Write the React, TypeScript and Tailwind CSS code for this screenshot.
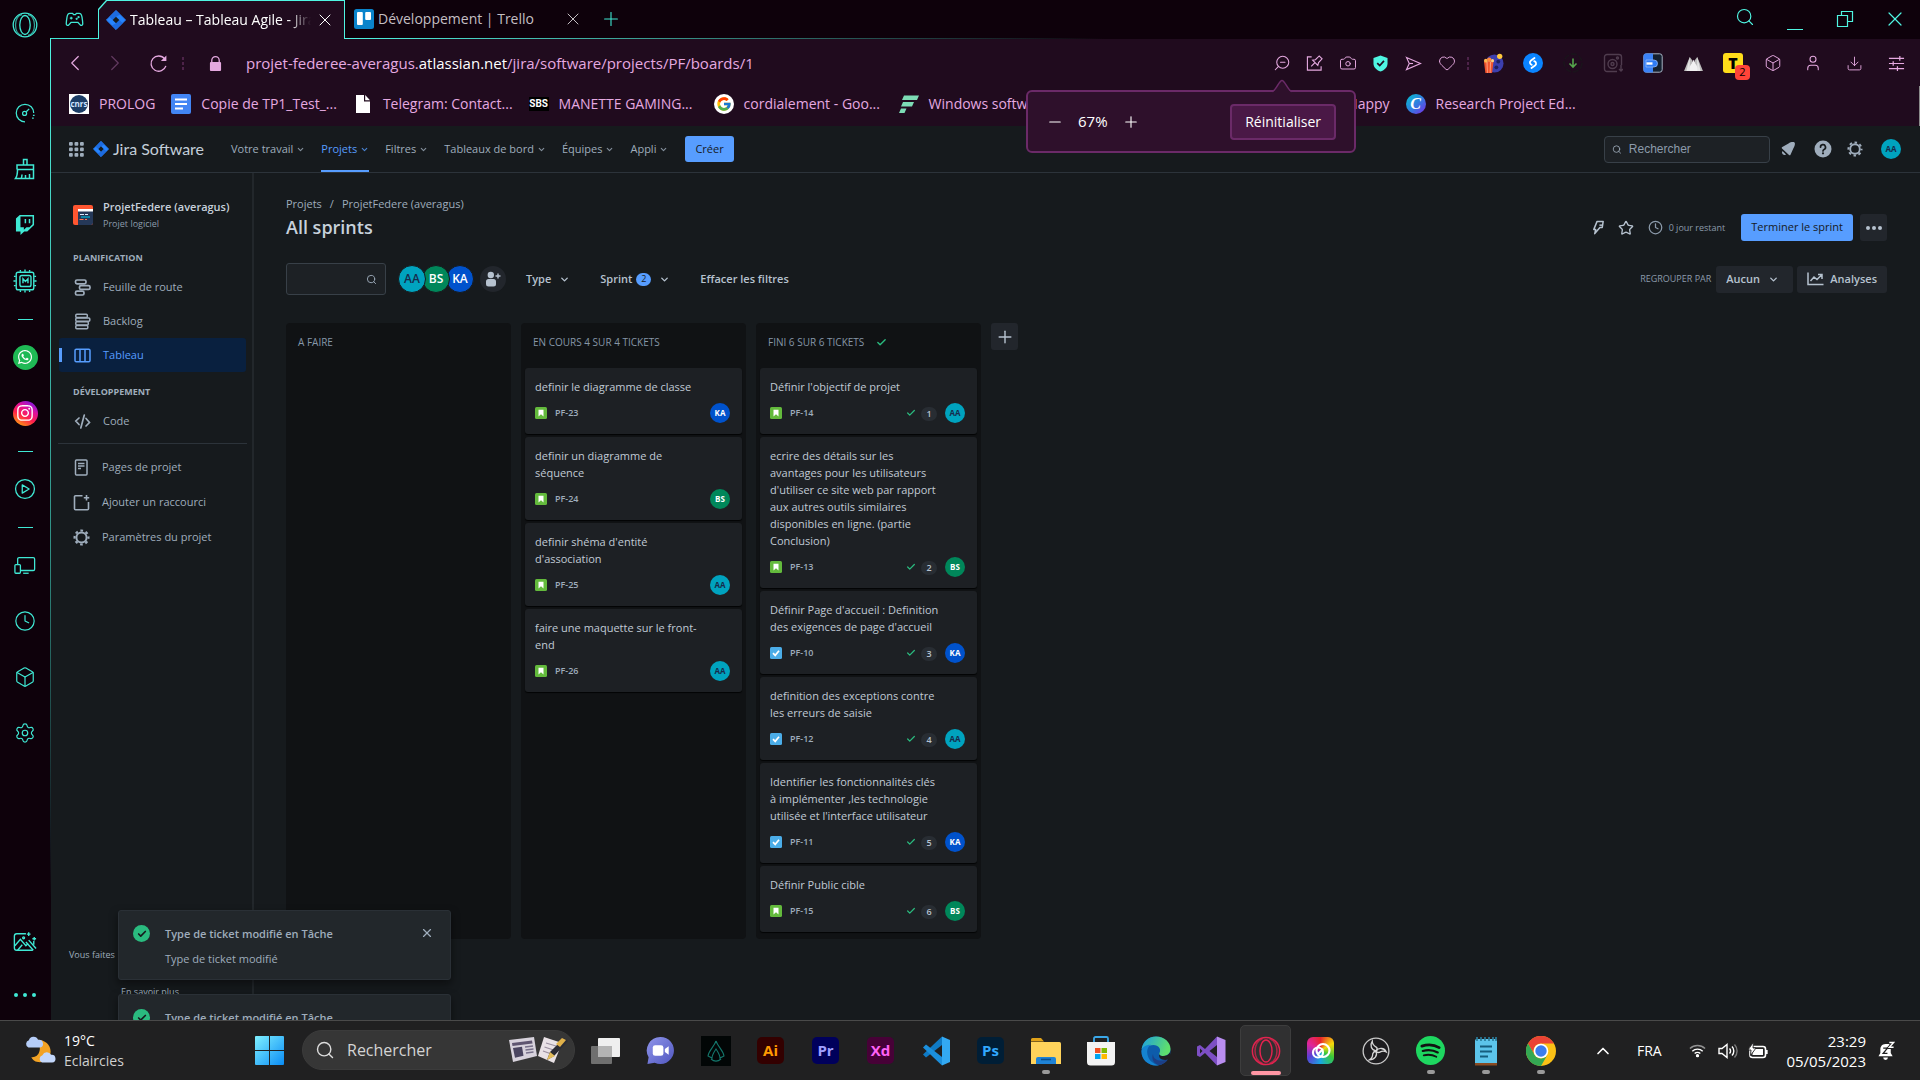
import React from 'react';
import {
  Box, Camera, Check, ChevronDown, ChevronLeft, ChevronRight, ChevronUp, Clock, Download,
  Heart, Minus, Plus, Search, Settings, Star, User, X, ZoomOut,
} from 'lucide-react';
import { FaTwitch, FaWhatsapp, FaInstagram } from 'react-icons/fa';
import { FcGoogle } from 'react-icons/fc';

/* ---------- Shared glyphs ---------- */

const JiraMark = ({ className }: { className: string }) => (
  <svg viewBox="0 0 24 24" className={className} aria-hidden="true">
    <path d="M12 0.5 23.5 12 12 23.5 0.5 12Z" fill="#2684ff" stroke="#2684ff" strokeLinejoin="round" />
    <path d="M12 0.5 17 5.500 12 8 8 12 4 8.500Z" fill="#1d6be0" />
    <path d="M12 23.500 7 18.500 12 16 16 12 20 15.500Z" fill="#1d6be0" />
    <path d="M12 8 16 12 12 16 8 12Z" fill="#161a1d" />
  </svg>
);

const CogOutline = ({ className }: { className: string }) => (
  <svg viewBox="0 0 24 24" className={className} fill="none" aria-hidden="true">
    <circle cx="12" cy="12" r="7.200" stroke="currentColor" strokeWidth="2.800" />
    <circle cx="12" cy="12" r="9.800" stroke="currentColor" strokeWidth="3" strokeDasharray="3.800 3.900" strokeDashoffset="1.900" />
  </svg>
);

const OperaRing = ({ className }: { className: string }) => (
  <svg viewBox="0 0 26 26" className={className} fill="none" stroke="currentColor" strokeWidth="1.300" aria-hidden="true">
    <circle cx="13" cy="13" r="11.800" />
    <ellipse cx="13" cy="13" rx="5.200" ry="9.500" />
    <path d="M10 2.500c-4.500 1-6.500 6-6.500 10.500s2 9.500 6.500 10.500M16 2.500c4.500 1 6.500 6 6.500 10.500s-2 9.500-6.500 10.500" opacity="0.700" />
  </svg>
);

/* ---------- Opera sidebar ---------- */

const Gauge = () => (
  <svg viewBox="0 0 24 24" className="size-5" fill="none" stroke="currentColor" strokeWidth="1.500">
    <path d="M12 22.500a10.500 10.500 0 1 1 10.500-10.500" />
    <path d="M22.500 14v1.500M21.500 17.500v1.500" strokeWidth="2" />
    <circle cx="11.500" cy="12.500" r="2.400" />
    <path d="m13.500 10.500 3.500-3.500" />
  </svg>
);
const Broom = () => (
  <svg viewBox="0 0 24 24" className="size-6" fill="none" stroke="currentColor" strokeWidth="1.500">
    <path d="M10.500 8V2.500h3.500V8M4 12.500V8h16.500v4.500M4 12.500h16.500M4.500 12.500c0 4-.500 7-2 9h18V12.500M8 21.500c.800-1 1-2 1-4M12.500 21.500V18M16.500 21.500V17" />
  </svg>
);
const Chip = () => (
  <svg viewBox="0 0 26 26" className="size-6" fill="none" stroke="currentColor" strokeWidth="1.500">
    <rect x="3.500" y="3.500" width="19" height="19" rx="2" />
    <rect x="7.500" y="7" width="12" height="12" rx="2" />
    <path d="M8 3V1M13 3V0.500M18 3V1M8 25v-2M13 25.500V23M18 25v-2M3 8H1M3 13H.500M3 18H1M25 8h-2M25.500 13H23M25 18h-2" />
    <path d="M10.800 15.500v-5l2.700 3 2.700-3v5" />
  </svg>
);
const PlayRing = () => (
  <svg viewBox="0 0 24 24" className="size-[22px]" fill="none" stroke="currentColor" strokeWidth="1.400">
    <circle cx="12" cy="12" r="10.300" />
    <path d="M9 7.500v9l7.500-4.500Z" strokeLinejoin="round" />
  </svg>
);
const Devices = () => (
  <svg viewBox="0 0 24 24" className="size-[22px]" fill="none" stroke="currentColor" strokeWidth="1.400">
    <path d="M4 11V5.500A1.500 1.500 0 0 1 5.500 4H21a1.500 1.500 0 0 1 1.500 1.500v11A1.500 1.500 0 0 1 21 18H7" />
    <rect x="1" y="11.500" width="6" height="9.500" rx="1" />
    <path d="M10 21h6" />
  </svg>
);
const MagicPicture = () => (
  <svg viewBox="0 0 26 26" className="size-6" fill="none" stroke="currentColor" strokeWidth="1.500">
    <path d="M14 4H4a2.500 2.500 0 0 0-2.500 2.500v13A2.500 2.500 0 0 0 4 22h17.500M22.500 12v4" />
    <path d="m2 17 6-7 6 7 2.500-2.500M5 22l5-6M17 11l8 9M14 13l8 9" />
    <circle cx="11.500" cy="8.500" r="1" />
    <path d="M17 2.500v4M15 4.500h4M23 7.500v4M21 9.500h4" />
  </svg>
);
const Gamepad = () => (
  <svg viewBox="0 0 20 16" className="h-[15px] w-[19px]" fill="none" stroke="currentColor" strokeWidth="1.400" strokeLinejoin="round">
    <path d="M5 1.500h3l1 1.300h2l1-1.300h3c1.800 0 2.600 1.500 3 4 .400 2.500.800 5.500.800 7s-1.300 2.300-2.500 1.500L13.500 11h-7l-2.800 3c-1.200.800-2.500 0-2.500-1.500s.400-4.500.800-7c.400-2.500 1.200-4 3-4Z" />
    <path d="M5 6.500h3M6.500 5v3" strokeWidth="1.200" /><circle cx="12.300" cy="7.300" r="0.500" /><circle cx="14.300" cy="5.500" r="0.500" />
  </svg>
);

const SideDash = () => (
  <div className="flex h-5 w-full items-center justify-center"><span className="h-px w-[15px] bg-[#3fe8d4]" /></div>
);
const SideButton = ({ label, children }: { label: string; children: React.ReactNode }) => (
  <button aria-label={label} className="flex h-14 w-full items-center justify-center">{children}</button>
);

const OperaSidebar = () => (
  <aside className="flex w-[50px] shrink-0 flex-col bg-[#0e010b] text-[#3fe8d4]">
    <button aria-label="Menu Opera" className="flex h-[50px] items-center justify-center"><OperaRing className="size-[26px]" /></button>
    <nav className="mt-[35px] flex flex-1 flex-col">
      <SideButton label="Contrôle GX"><Gauge /></SideButton>
      <SideButton label="Nettoyeur GX"><Broom /></SideButton>
      <SideButton label="Twitch"><FaTwitch className="size-5" /></SideButton>
      <SideButton label="Mods"><Chip /></SideButton>
      <SideDash />
      <SideButton label="WhatsApp">
        <span className="flex size-[25px] items-center justify-center rounded-full bg-[#1fb955] text-white"><FaWhatsapp className="size-4" /></span>
      </SideButton>
      <SideButton label="Instagram">
        <span className="flex size-[25px] items-center justify-center rounded-full bg-[linear-gradient(30deg,#ffc400_0%,#ff1f4b_40%,#e0109a_65%,#5a1bff_100%)] text-white"><FaInstagram className="size-[18px]" /></span>
      </SideButton>
      <SideDash />
      <SideButton label="Lecteur"><PlayRing /></SideButton>
      <SideDash />
      <SideButton label="Flow"><Devices /></SideButton>
      <SideButton label="Historique"><Clock className="size-[22px]" strokeWidth={1.300} /></SideButton>
      <SideButton label="Extensions"><Box className="size-[22px]" strokeWidth={1.300} /></SideButton>
      <SideButton label="Réglages"><Settings className="size-[22px]" strokeWidth={1.300} /></SideButton>
      <div className="mt-auto">
        <SideButton label="Fond d'écran"><MagicPicture /></SideButton>
        <button aria-label="Plus" className="flex h-[50px] w-full items-center justify-center gap-[5px]">
          <span className="size-1 rounded-full bg-current" /><span className="size-1 rounded-full bg-current" /><span className="size-1 rounded-full bg-current" />
        </button>
      </div>
    </nav>
  </aside>
);

/* ---------- Browser chrome ---------- */

const TabBar = () => (
  <div className="flex h-[39px] bg-[#0e010b] text-sm">
    <div className="flex w-[47px] items-center justify-center border-b border-[#3fe8d4] text-[#3fe8d4]">
      <Gamepad />
    </div>
    <div className="w-[247px] bg-[#4ff5e2] px-px pt-px [clip-path:polygon(8px_0,100%_0,100%_100%,0_100%,0_9px)]">
      <div className="flex h-full items-center bg-[#200b1e] pl-[7px] pr-[9px] [clip-path:polygon(8px_0,100%_0,100%_100%,0_100%,0_9px)]">
        <JiraMark className="size-5 shrink-0" />
        <span className="ml-1 min-w-0 flex-1 overflow-hidden whitespace-nowrap text-white [mask-image:linear-gradient(to_right,black_88%,transparent)]">Tableau – Tableau Agile - Jira</span>
        <button aria-label="Fermer l'onglet" className="ml-1 text-white"><X className="size-5" strokeWidth={1.200} /></button>
      </div>
    </div>
    <div className="flex min-w-0 flex-1 flex-col">
      <div className="flex flex-1 items-center">
        <svg viewBox="0 0 20 20" className="ml-[9px] size-5"><rect width="20" height="20" rx="2.500" fill="#0a84cc" /><rect x="3" y="3" width="5.800" height="13" rx="1" fill="#fff" /><rect x="11.200" y="3" width="5.800" height="8" rx="1" fill="#fff" /></svg>
        <span className="ml-1 w-[185px] text-[#c4bfc3]">Développement | Trello</span>
        <button aria-label="Fermer l'onglet" className="text-[#c4bfc3]"><X className="size-5" strokeWidth={1.200} /></button>
        <button aria-label="Nouvel onglet" className="ml-[17px] text-[#3fe8d4]"><Plus className="size-[22px]" strokeWidth={1.200} /></button>
        <div className="ml-auto flex text-[#4ff5e2]">
          <button aria-label="Rechercher dans les onglets" className="flex w-[50px] justify-center"><Search className="size-5" strokeWidth={1.400} /></button>
          <button aria-label="Réduire" className="flex w-[50px] items-end justify-center"><span className="mb-px h-px w-4 bg-current" /></button>
          <button aria-label="Restaurer" className="flex w-[50px] items-center justify-center">
            <svg viewBox="0 0 18 18" className="size-[18px]" fill="none" stroke="currentColor" strokeWidth="1.200"><path d="M1.500 5.500h10v11h-10zM5.500 5.500v-4h11v10h-5" /></svg>
          </button>
          <button aria-label="Fermer" className="flex w-[50px] items-center justify-center"><X className="size-6" strokeWidth={1.200} /></button>
        </div>
      </div>
      <div className="h-px bg-[linear-gradient(to_right,#4ff5e2_0,#3a9c91_300px,transparent_760px)]" />
    </div>
  </div>
);

const ZoomPopup = () => (
  <div className="absolute right-[-58px] top-9 z-30 flex h-[63px] w-[330px] items-center rounded-md border-2 border-[#6b2a68] bg-[#2e102b] px-[18px] text-sm text-white">
    <svg viewBox="0 0 20 14" className="absolute right-[62px] top-[-13px] h-[14px] w-5">
      <path d="M0 13 C4 13 7 1.500 10 1.500 C13 1.500 16 13 20 13 V14 H0Z" fill="#2e102b" />
      <path d="M0 12.500 C4 12 7 1.500 10 1.500 C13 1.500 16 12 20 12.500" fill="none" stroke="#6b2a68" strokeWidth="1.500" />
    </svg>
    <button aria-label="Zoom arrière"><Minus className="size-[18px]" strokeWidth={1.500} /></button>
    <span className="mx-3.5 text-[15px]">67%</span>
    <button aria-label="Zoom avant"><Plus className="size-[18px]" strokeWidth={1.500} /></button>
    <button className="ml-auto h-9 rounded border-2 border-[#6b2a68] bg-[#4a1846] px-[13px]">Réinitialiser</button>
  </div>
);

const Cell = ({ label, wide, children }: { label: string; wide?: boolean; children: React.ReactNode }) => (
  <button aria-label={label} className={wide ? 'flex w-10 items-center justify-center' : 'flex w-[33px] items-center justify-center'}>{children}</button>
);

const Popcorn = () => (
  <svg viewBox="0 0 22 22" className="size-[21px]">
    <circle cx="12" cy="11" r="9.500" fill="#3c3fae" />
    <circle cx="16" cy="9" r="2" fill="#20205e" /><circle cx="14" cy="15" r="2" fill="#20205e" />
    <path d="M1 9h10l-1.500 12H2.500Z" fill="#f0532d" /><path d="M3.500 9h1.300l.300 12H4.200zM7.300 9h1.300l-.700 12H7Z" fill="#ff9a7a" />
    <circle cx="3" cy="8" r="2" fill="#ffb54d" /><circle cx="6.500" cy="7" r="2.300" fill="#ff8a3d" /><circle cx="10" cy="8" r="1.600" fill="#ffcf7a" /><circle cx="17.500" cy="3.500" r="2.800" fill="#ffc93c" />
  </svg>
);

const AddressBar = () => (
  <div className="flex h-[48px] items-center pl-1 pr-[3px] text-[#e5a9e0]">
    <button aria-label="Précédent" className="flex w-10 justify-center"><ChevronLeft className="size-[26px]" strokeWidth={1.100} /></button>
    <button aria-label="Suivant" className="flex w-10 justify-center text-[#623a60]"><ChevronRight className="size-[26px]" strokeWidth={1.100} /></button>
    <button aria-label="Recharger" className="flex w-[46px] justify-center">
      <svg viewBox="0 0 20 20" className="size-[19px]" fill="none" stroke="currentColor" strokeWidth="1.400"><path d="M17.800 12.500A8 8 0 1 1 16.500 5.200" /><path d="M18.300 1.500v5.800h-5.800Z" fill="currentColor" stroke="none" /></svg>
    </button>
    <span className="w-1.5 text-[#4d2349]"><svg viewBox="0 0 4 14" className="h-3.5 w-1" fill="currentColor"><rect x="1" y="1" width="2" height="3" /><rect x="1" y="6" width="2" height="3" /><rect x="1" y="11" width="2" height="3" /></svg></span>
    <button aria-label="Informations du site" className="flex w-14 justify-center">
      <svg viewBox="0 0 14 18" className="h-[17px] w-[13px]"><path d="M3 9V5.500a4 4 0 0 1 8 0V9" fill="none" stroke="currentColor" strokeWidth="1.400" /><rect x="1" y="7.500" width="12" height="9.500" rx="1" fill="currentColor" /></svg>
    </button>
    <div className="min-w-0 flex-1 truncate pl-[3px] text-[15px]">projet-federee-averagus.<span className="text-white">atlassian.net</span>/jira/software/projects/PF/boards/1</div>
    <div className="flex items-center">
      <div className="relative">
        <Cell label="Zoom"><ZoomOut className="size-[18px] -scale-x-100" strokeWidth={1.400} /></Cell>
        <ZoomPopup />
      </div>
      <Cell label="Épingler">
        <svg viewBox="0 0 18 18" className="size-[17px]" fill="none" stroke="currentColor" strokeWidth="1.200"><path d="M6 2H1.500v14h14.500v-4M5.500 12l4-4M7 5.500l5.500 5.500.800-3L17 4l-3-3-4 4Z" /></svg>
      </Cell>
      <Cell label="Capture"><Camera className="size-[18px]" strokeWidth={1.300} /></Cell>
      <Cell label="VPN">
        <svg viewBox="0 0 16 18" className="h-[17px] w-[15px]"><path d="M8 .500 15.500 3v6c0 4-3 7-7.500 8.500C3.500 16 .500 13 .500 9V3Z" fill="#4ff5e2" /><path d="m4.500 8.500 2.700 2.700 4.500-5" fill="none" stroke="#200b1e" strokeWidth="1.800" /></svg>
      </Cell>
      <Cell label="Envoyer vers Flow">
        <svg viewBox="0 0 18 16" className="h-[15px] w-[17px]" fill="none" stroke="currentColor" strokeWidth="1.200"><path d="m1.500 1.500 15 6.500-15 6.500 3-6.500Z" /><path d="M4.500 8h4" /></svg>
      </Cell>
      <Cell label="Favoris"><Heart className="size-[18px]" strokeWidth={1.300} /></Cell>
      <span className="flex w-2.5 justify-center text-[#4d2349]"><svg viewBox="0 0 4 14" className="h-3.5 w-1" fill="currentColor"><rect x="1" y="1" width="2" height="3" /><rect x="1" y="6" width="2" height="3" /><rect x="1" y="11" width="2" height="3" /></svg></span>
      <Cell wide label="Cinéma"><Popcorn /></Cell>
      <Cell wide label="Shazam">
        <svg viewBox="0 0 20 20" className="size-5"><circle cx="10" cy="10" r="10" fill="#0a84ff" /><path d="M11.500 5 8 7.500c-2 1.600-1 3.800.800 4.300M8.500 15l3.500-2.500c2-1.600 1-3.800-.800-4.300" fill="none" stroke="#fff" strokeWidth="1.800" strokeLinecap="round" /></svg>
      </Cell>
      <Cell wide label="Télécharger">
        <svg viewBox="0 0 20 20" className="size-5" fill="none"><circle cx="10" cy="10" r="9" stroke="#1b131c" strokeWidth="1.800" strokeDasharray="6 2" /><path d="M10 5.500v8M6.500 10.500 10 14l3.500-3.500" stroke="#56a54c" strokeWidth="1.600" /></svg>
      </Cell>
      <Cell wide label="Enregistrer l'image">
        <svg viewBox="0 0 20 20" className="size-5" fill="none" stroke="#4f3c4e" strokeWidth="1.400"><path d="M14 18.500H4A2.500 2.500 0 0 1 1.500 16V4A2.500 2.500 0 0 1 4 1.500h12A2.500 2.500 0 0 1 18.500 4v8M18 12v6M16 16l2 2 2-2" /><circle cx="9.500" cy="11" r="4.500" /><circle cx="9.500" cy="11" r="1.500" /><circle cx="14.500" cy="5" r="1" /></svg>
      </Cell>
      <Cell wide label="Traduction">
        <svg viewBox="0 0 20 20" className="size-5"><rect x=".800" y=".800" width="18.400" height="18.400" rx="2.500" fill="#14202f" stroke="#a5b2c2" strokeWidth="1" /><path d="M3 .500h7v19H3A2.500 2.500 0 0 1 .500 17V3A2.500 2.500 0 0 1 3 .500" fill="#3b82f6" /><path d="M3 7h8a3.500 3.500 0 0 1 0 7H3Z" fill="#2f7cf6" stroke="#8fb8fb" strokeWidth="0.800" /><path d="M3.500 10.500h6" stroke="#fff" strokeWidth="2.400" /></svg>
      </Cell>
      <Cell wide label="Montagnes">
        <svg viewBox="0 0 22 18" className="h-[17px] w-[21px]"><path d="M1 17 7 2l3 4-3 11Z" fill="#bcbcbc" /><path d="M21 17 15 2l-3 4 3 11Z" fill="#bcbcbc" /><path d="M4.500 17 11 5l6.500 12Z" fill="#f2f2f2" /><path d="M7 2v15H3.500Z" fill="#e6e6e6" /><path d="m15 2 3.500 15H15Z" fill="#e6e6e6" /></svg>
      </Cell>
      <Cell wide label="Tâches">
        <span className="relative flex size-5 items-center justify-center rounded-[3px] bg-[#ffdd1a] text-base font-extrabold text-black">T
          <span className="absolute left-3 top-3 flex h-[15px] w-[15px] items-center justify-center rounded-sm bg-[#ff4438] text-[11px] font-normal">2</span>
        </span>
      </Cell>
      <Cell wide label="Extensions"><Box className="size-[18px]" strokeWidth={1.300} /></Cell>
      <Cell wide label="Profil"><User className="size-[18px]" strokeWidth={1.400} /></Cell>
      <button aria-label="Téléchargements" className="flex w-[42px] justify-center"><Download className="size-[17px]" strokeWidth={1.300} /></button>
      <button aria-label="Configuration rapide" className="flex w-[42px] justify-center">
        <svg viewBox="0 0 18 18" className="size-[17px]" fill="none" stroke="currentColor" strokeWidth="1.300"><path d="M1 3.500h16M1 9h16M1 14.500h16M12.500 1v5M5.500 6.500v5M10 12v5" /></svg>
      </button>
    </div>
  </div>
);

const Bookmark = ({ icon, children, className = '' }: { icon?: React.ReactNode; children: React.ReactNode; className?: string }) => (
  <a href="#" className={`flex shrink-0 items-center gap-2.5 ${className}`}>
    {icon && <span className="flex size-5 shrink-0 items-center justify-center">{icon}</span>}
    <span className="whitespace-nowrap">{children}</span>
  </a>
);

const BookmarkBar = () => (
  <div className="relative flex h-[39px] items-start gap-4 pl-[18px] pt-[7px] text-sm text-[#e5a9e0]">
    <Bookmark icon={<span className="flex size-5 items-center justify-center bg-white"><span className="flex size-[18px] items-center justify-center rounded-full bg-[#1c3d66] text-[8px] font-bold text-[#cfe3ff]">cnrs</span></span>}>PROLOG</Bookmark>
    <Bookmark icon={<svg viewBox="0 0 20 20" className="size-5"><rect width="20" height="20" rx="2" fill="#4285f4" /><path d="M4 5.500h12M4 10h12M4 14.500h8" stroke="#fff" strokeWidth="2" /></svg>}>Copie de TP1_Test_...</Bookmark>
    <Bookmark icon={<svg viewBox="0 0 14 18" className="h-[18px] w-3.5"><path d="M0 0h8v6.500h6V18H0Z" fill="#fff" /><path d="M9.200 0 14 5.200H9.200Z" fill="#fff" /></svg>}>Telegram: Contact...</Bookmark>
    <Bookmark className="w-[169px]" icon={<span className="flex h-3.5 w-5 items-center justify-center bg-black font-['Roboto'] text-[10px] font-bold text-white">SBS</span>}>MANETTE GAMING...</Bookmark>
    <Bookmark className="w-[169px]" icon={<span className="flex size-5 items-center justify-center rounded-full bg-white"><FcGoogle className="size-4" /></span>}>cordialement - Goo...</Bookmark>
    <Bookmark className="w-[170px]" icon={<svg viewBox="0 0 20 20" className="size-5"><path d="M5 1.500h15l-2 4.500H3Zm-1 6.500h11l-2 4.500H2ZM2 14.500h5.500L5.500 19H0Z" fill="#7ddcb5" /></svg>}>Windows software...</Bookmark>
    <Bookmark className="w-[305px] justify-end">Happy</Bookmark>
    <Bookmark icon={<span className="flex size-5 items-center justify-center rounded-full bg-[linear-gradient(135deg,#00c4cc,#2f7fe0_50%,#7d2ae8)] font-['Liberation_Serif'] text-base font-bold italic text-white">C</span>}>Research Project Ed...</Bookmark>
    <span className="absolute bottom-0 right-0 h-10 w-px bg-[#8a8a8a]" />
  </div>
);

/* ---------- Jira ---------- */

const NAV = ['Votre travail', 'Projets', 'Filtres', 'Tableaux de bord', 'Équipes', 'Appli'];

const JiraHeader = () => (
  <header className="flex h-[47px] items-center border-b border-[#2c333a] pl-[18px] pr-[19px] text-[#9fadbc]">
    <button aria-label="Applications">
      <svg viewBox="0 0 15 15" className="size-[15px]" fill="currentColor">{[0, 5.5, 11].map((y) => [0, 5.5, 11].map((x) => <rect key={`${x}-${y}`} x={x} y={y} width="3.800" height="3.800" rx="1" />))}</svg>
    </button>
    <a href="#" className="ml-[9px] flex w-[114px] items-center gap-1 whitespace-nowrap font-['Lato'] text-base text-[#c3ced9]">
      <JiraMark className="size-4" />Jira Software
    </a>
    <nav className="ml-6 flex h-full items-stretch gap-4 text-[11px] font-medium">
      {NAV.map((n) => (
        <button key={n} className={n === 'Projets' ? 'flex items-center gap-[3px] whitespace-nowrap border-y-2 border-t-transparent border-b-[#579dff] text-[#579dff]' : 'flex items-center gap-[3px] whitespace-nowrap'}>
          {n}<ChevronDown className="size-[9px] opacity-80" strokeWidth={3} />
        </button>
      ))}
    </nav>
    <button className="ml-[17px] h-[26px] rounded-[3px] bg-[#579dff] px-2.5 text-[11px] font-medium text-[#161a1d]">Créer</button>
    <div className="ml-auto flex items-center">
      <label className="flex h-[27px] w-[166px] items-center gap-[7px] rounded border border-[#384048] bg-[#1d2125] pl-[7px]">
        <Search className="size-[11px]" strokeWidth={2} />
        <input aria-label="Rechercher dans Jira" placeholder="Rechercher" className="w-full bg-transparent font-['Liberation_Sans'] text-xs outline-none placeholder:text-[#8c9bab]" />
      </label>
      <button aria-label="Notifications" className="ml-2.5 flex w-4 justify-center">
        <svg viewBox="0 0 16 16" className="size-4" fill="currentColor"><path d="M8.500 2.500c2-1.500 5-1.800 6-1s.200 4-1.200 6l-2.800 6.300c-.300.700-1 .700-1.500.200L2 7.500C1.500 7 1.700 6.300 2.300 6Z" /><path d="M2.500 10 6 13.500a2.500 2.500 0 0 1-3.500-3.500" /></svg>
      </button>
      <button aria-label="Aide" className="ml-[18px]">
        <svg viewBox="0 0 18 18" className="size-[18px]"><circle cx="9" cy="9" r="8.500" fill="currentColor" /><path d="M6.500 7.200a2.500 2.500 0 1 1 3.600 2.200c-.800.400-1.100.800-1.100 1.600" fill="none" stroke="#161a1d" strokeWidth="1.700" strokeLinecap="round" /><circle cx="9" cy="13.300" r="1.100" fill="#161a1d" /></svg>
      </button>
      <button aria-label="Paramètres" className="ml-[15px]"><CogOutline className="size-4" /></button>
      <button className="ml-[18px] flex size-5 items-center justify-center rounded-full bg-[#00a3bf] text-[8px] font-bold text-[#172b4d]">AA</button>
    </div>
  </header>
);

const icon16 = 'size-[17px]';
const RoadmapIcon = () => (
  <svg viewBox="0 0 17 17" className={icon16} fill="none" stroke="currentColor" strokeWidth="1.700"><rect x="1.500" y="1" width="10.500" height="3.800" rx="1.500" /><rect x="5.500" y="6.600" width="10.500" height="3.800" rx="1.500" /><rect x="1.500" y="12.200" width="8.500" height="3.800" rx="1.500" /></svg>
);
const BacklogIcon = () => (
  <svg viewBox="0 0 17 17" className={icon16} fill="none" stroke="currentColor" strokeWidth="1.500"><rect x="1.800" y="1.200" width="11.500" height="3.200" rx="1" /><rect x="1.800" y="4.900" width="14" height="3.400" rx="1" /><rect x="1.800" y="8.800" width="12.500" height="3.200" rx="1" /><rect x="1.800" y="12.400" width="12" height="3.400" rx="1" /></svg>
);
const BoardIcon = () => (
  <svg viewBox="0 0 17 17" className={icon16} fill="none" stroke="currentColor" strokeWidth="1.500"><rect x="1" y="2.200" width="15" height="12.600" rx="1.300" /><path d="M6 2.500v12M11 2.500v12" /></svg>
);
const CodeIcon = () => (
  <svg viewBox="0 0 17 17" className={icon16} fill="none" stroke="currentColor" strokeWidth="1.700"><path d="M5 5 1.800 8 5 11.500M12 5.500 15.500 9.500 12 13M10.300 2 6.800 15" strokeLinecap="round" /></svg>
);
const PageIcon = () => (
  <svg viewBox="0 0 17 17" className={icon16} fill="none" stroke="currentColor" strokeWidth="1.500"><rect x="2.500" y="1" width="11.500" height="15" rx="1" /><path d="M5 4.500h6.500M5 7h6.500M5 9.500h3" strokeWidth="1.400" /></svg>
);
const ShortcutIcon = () => (
  <svg viewBox="0 0 17 17" className={icon16} fill="none" stroke="currentColor" strokeWidth="1.600"><path d="M9.500 1.800H2.500a1 1 0 0 0-1 1v12a1 1 0 0 0 1 1h12a1 1 0 0 0 1-1V8M13.500 1v5.400M10.800 3.700h5.400" /></svg>
);

const SideLink = ({ icon, children }: { icon: React.ReactNode; children: React.ReactNode }) => (
  <a href="#" className="flex h-[34px] items-center gap-3 pl-[15px] text-[11px]">{icon}{children}</a>
);

const JiraSidebar = () => (
  <aside className="flex w-[203px] shrink-0 flex-col border-r-2 border-[#22272b] text-[#9fadbc]">
    <div className="mt-[18px] flex h-12 items-center gap-2.5 pl-[22px]">
      <svg viewBox="0 0 20 20" className="size-5"><rect width="20" height="20" rx="2" fill="#ff5630" /><path d="M5 4h15v14a2 2 0 0 1-2 2H5Z" fill="#253858" /><path d="M5 4h15v2.500H5Z" fill="#fff" /><path d="M7 9.500h4M12 9.500h3" stroke="#deebff" strokeWidth="1.200" /><path d="M8 12h9" stroke="#00b8d9" strokeWidth="1.200" /><path d="M6.500 14.500h4M12 14.500h2" stroke="#ff7452" strokeWidth="1.200" /></svg>
      <div className="whitespace-nowrap">
        <div className="text-[11px]/[17px] font-semibold text-[#c7d1db]">ProjetFedere (averagus)</div>
        <div className="text-[9px]/[17px] text-[#8c9bab]">Projet logiciel</div>
      </div>
    </div>
    <h2 className="mt-[9px] pl-[22px] text-[9px]/[20px] font-bold">PLANIFICATION</h2>
    <nav className="ml-2 mr-1.5 mt-0.5">
      <SideLink icon={<RoadmapIcon />}>Feuille de route</SideLink>
      <SideLink icon={<BacklogIcon />}>Backlog</SideLink>
      <a href="#" aria-current="page" className="flex h-[34px] items-center rounded-[3px] bg-[#09203f] text-[11px] text-[#579dff]">
        <span className="mr-3 h-3.5 w-[3px] bg-[#579dff]" /><BoardIcon /><span className="ml-3">Tableau</span>
      </a>
    </nav>
    <h2 className="mt-2.5 pl-[22px] text-[9px]/[20px] font-bold">DÉVELOPPEMENT</h2>
    <nav className="ml-2 mr-1.5 mt-0.5"><SideLink icon={<CodeIcon />}>Code</SideLink></nav>
    <hr className="ml-[7px] mr-[5px] mt-[5px] border-[#2c333a]" />
    <nav className="ml-[7px] mr-1.5 mt-1.5 flex flex-col gap-px">
      <SideLink icon={<PageIcon />}>Pages de projet</SideLink>
      <SideLink icon={<ShortcutIcon />}>Ajouter un raccourci</SideLink>
      <SideLink icon={<CogOutline className={icon16} />}>Paramètres du projet</SideLink>
    </nav>
    <footer className="mb-[21px] mt-auto text-[9px]/[14px]">
      <p className="pl-[18px]">Vous faites</p>
      <p className="mt-[23px] pl-[70px]"><a href="#">En savoir plus</a></p>
    </footer>
  </aside>
);

type Who = 'AA' | 'BS' | 'KA';
const AVATAR: Record<Who, string> = { AA: 'bg-[#00a3bf] text-[#172b4d]', BS: 'bg-[#00875a] text-white', KA: 'bg-[#0052cc] text-white' };

type Issue = { title: string; id: string; who: Who; type: 'story' | 'task'; pos?: number };
const DOING: Issue[] = [
  { title: 'definir le diagramme de classe', id: 'PF-23', who: 'KA', type: 'story' },
  { title: 'definir un diagramme de séquence', id: 'PF-24', who: 'BS', type: 'story' },
  { title: "definir shéma d'entité d'association", id: 'PF-25', who: 'AA', type: 'story' },
  { title: 'faire une maquette sur le front-end', id: 'PF-26', who: 'AA', type: 'story' },
];
const DONE: Issue[] = [
  { title: "Définir l'objectif de projet", id: 'PF-14', who: 'AA', type: 'story', pos: 1 },
  { title: "ecrire des détails sur les avantages pour les utilisateurs d'utiliser ce site web par rapport aux autres outils similaires disponibles en ligne. (partie Conclusion)", id: 'PF-13', who: 'BS', type: 'story', pos: 2 },
  { title: "Définir Page d'accueil : Definition des exigences de page d'accueil", id: 'PF-10', who: 'KA', type: 'task', pos: 3 },
  { title: 'definition des exceptions contre les erreurs de saisie', id: 'PF-12', who: 'AA', type: 'task', pos: 4 },
  { title: "Identifier les fonctionnalités clés à implémenter ,les technologie utilisée et l'interface utilisateur", id: 'PF-11', who: 'KA', type: 'task', pos: 5 },
  { title: 'Définir Public cible', id: 'PF-15', who: 'BS', type: 'story', pos: 6 },
];

const TypeIcon = ({ type }: { type: Issue['type'] }) =>
  type === 'story' ? (
    <svg viewBox="0 0 12 12" className="size-3"><rect width="12" height="12" rx="1.500" fill="#63ba3c" /><path d="M3.500 2.800h5v6.700L6 7.200 3.500 9.500Z" fill="#fff" /></svg>
  ) : (
    <svg viewBox="0 0 12 12" className="size-3"><rect width="12" height="12" rx="1.500" fill="#4bade8" /><path d="m3 6.200 2.200 2.200L9 3.800" fill="none" stroke="#fff" strokeWidth="1.700" /></svg>
  );

const Card = ({ issue }: { issue: Issue }) => (
  <article className="rounded-[3px] bg-[#1d2024] pb-[11px] pl-2.5 pr-3 pt-2.5 shadow-[0_1px_1px_#030404]">
    <h3 className="w-[171px] text-[11px]/[17px] text-[#c0cad5]">{issue.title}</h3>
    <div className="mt-2 flex h-5 items-center">
      <TypeIcon type={issue.type} />
      <a href="#" className="ml-2 text-[9px] font-semibold text-[#9fadbc]">{issue.id}</a>
      <div className="ml-auto flex items-center">
        {issue.pos && (
          <>
            <Check className="size-[10px] text-[#2abb7f]" strokeWidth={3} />
            <span className="ml-[5px] mr-2 mt-0.5 flex h-3.5 w-4 items-center justify-center rounded-full bg-[#282d33] text-[9px] font-semibold text-[#b6c2cf]">{issue.pos}</span>
          </>
        )}
        <span className={`flex size-5 items-center justify-center rounded-full text-[8px] font-bold ${AVATAR[issue.who]}`}>{issue.who}</span>
      </div>
    </div>
  </article>
);

const Column = ({ title, done, issues }: { title: string; done?: boolean; issues: Issue[] }) => (
  <section className="w-[225px] rounded bg-[#101214] px-1 pb-[7px]">
    <h2 className="flex h-[45px] items-start gap-3 pl-2 pt-[11px] text-[10px]/[16px] font-medium text-[#8696a7]">
      {title}
      {done && <Check className="mt-[3px] size-[11px] text-[#2abb7f]" strokeWidth={3} />}
    </h2>
    <div className="flex flex-col gap-[3px]">{issues.map((i) => <Card key={i.id} issue={i} />)}</div>
  </section>
);

const Board = () => (
  <main className="min-w-0 flex-1 pl-8 pr-[33px] text-[11px] text-[#b6c2cf]">
    <div className="flex justify-between">
      <div>
        <nav className="mt-[22px] flex gap-2 text-[11px]/[18px] text-[#9fadbc]">
          <a href="#">Projets</a><span>/</span><a href="#">ProjetFedere (averagus)</a>
        </nav>
        <h1 className="mt-0.5 text-lg/[24px] font-semibold text-[#c7d1db]">All sprints</h1>
      </div>
      <div className="mt-[41px] flex h-[27px] items-center">
        <button aria-label="Automatisation">
          <svg viewBox="0 0 15 16" className="size-[15px]" fill="none" stroke="currentColor" strokeWidth="1.600" strokeLinejoin="round"><path d="M6 1.500h6.500L11.500 8H9L3.500 14.500 4.500 10H2.500Z" /><path d="M12 5.500H8.500" /></svg>
        </button>
        <button aria-label="Favori" className="ml-3"><Star className="size-4" strokeWidth={2} /></button>
        <Clock className="ml-3.5 size-[15px] text-[#8c9bab]" strokeWidth={2} />
        <span className="ml-1.5 text-[9px] text-[#8c9bab]">0 jour restant</span>
        <button className="ml-4 h-[27px] rounded-[3px] bg-[#579dff] px-2.5 text-[#161a1d]">Terminer le sprint</button>
        <button aria-label="Plus d'actions" className="ml-[7px] flex h-[27px] w-[27px] items-center justify-center gap-0.5 rounded-[3px] bg-[#22262c]">
          <span className="size-1 rounded-full bg-current" /><span className="size-1 rounded-full bg-current" /><span className="size-1 rounded-full bg-current" />
        </button>
      </div>
    </div>

    <div className="mt-[22px] flex h-8 items-center">
      <label className="flex h-8 w-[100px] items-center rounded-[3px] border border-[#384048] bg-[#1d2125] px-2">
        <input aria-label="Rechercher sur le tableau" className="w-full min-w-0 bg-transparent outline-none" />
        <Search className="size-[11px] shrink-0 text-[#9fadbc]" strokeWidth={2} />
      </label>
      <div className="ml-3 flex -space-x-[4px]">
        {(['AA', 'BS', 'KA'] as Who[]).map((w, i) => (
          <button key={w} className={`flex size-7 items-center justify-center rounded-full border border-[#161a1d] text-xs font-semibold ${['z-30', 'z-20', 'z-10'][i]} ${AVATAR[w]}`}>{w}</button>
        ))}
      </div>
      <button aria-label="Ajouter des personnes" className="ml-1.5 flex size-[26px] items-center justify-center rounded-full bg-[#22262c]">
        <svg viewBox="0 0 16 16" className="size-4" fill="currentColor"><circle cx="5.800" cy="4" r="3.200" /><rect x="1" y="8" width="10" height="7.500" rx="2.500" /><path d="M12.300 2.500h1.400v1.800h1.800v1.400h-1.800v1.800h-1.400V5.700h-1.800V4.300h1.800Z" /></svg>
      </button>
      <button className="ml-5 flex items-center gap-2 font-semibold">Type<ChevronDown className="size-[11px]" strokeWidth={3} /></button>
      <button className="ml-[30px] flex items-center font-semibold">Sprint
        <span className="ml-1 flex h-[13px] w-[15px] items-center justify-center rounded-full bg-[#579dff] text-[9px] font-medium text-[#161a1d]">2</span>
        <ChevronDown className="ml-2 size-[11px]" strokeWidth={3} />
      </button>
      <button className="ml-[30px] font-semibold">Effacer les filtres</button>
      <div className="ml-auto flex items-center">
        <label htmlFor="group" className="text-[9px] text-[#8c9bab]">REGROUPER PAR</label>
        <span className="relative ml-[5px] flex items-center">
          <select id="group" className="h-[27px] w-[77px] appearance-none rounded-[3px] bg-[#22262c] pl-2.5 font-semibold"><option>Aucun</option></select>
          <ChevronDown className="pointer-events-none absolute right-3.5 size-[11px]" strokeWidth={3} />
        </span>
        <button className="ml-1 flex h-[27px] items-center gap-1.5 rounded-[3px] bg-[#22262c] px-2.5 font-semibold">
          <svg viewBox="0 0 17 14" className="h-3.5 w-[17px]" fill="none" stroke="currentColor" strokeWidth="1.500"><path d="M1 .500v12h15.500M3.500 9l3.500-4 3 2.500L14.500 3M11 2.500h4V7" /></svg>
          Analyses
        </button>
      </div>
    </div>

    <div className="mt-7 flex items-stretch gap-2.5">
      <Column title="A FAIRE" issues={[]} />
      <Column title="EN COURS 4 SUR 4 TICKETS" issues={DOING} />
      <Column title="FINI 6 SUR 6 TICKETS" done issues={DONE} />
      <button aria-label="Créer une colonne" className="flex size-[27px] items-center justify-center rounded-[3px] bg-[#22262c]"><Plus className="size-5" strokeWidth={1.700} /></button>
    </div>
  </main>
);

const Toast = ({ sub }: { sub?: string }) => (
  <div role="status" className="flex h-[70px] w-[333px] items-start rounded-[3px] border border-[#2a3036] bg-[#22272b] pl-3.5 pr-4 pt-3.5 text-[11px] text-[#9fadbc] shadow-[0_4px_8px_rgba(3,4,4,0.5)]">
    <span className="flex size-[17px] items-center justify-center rounded-full bg-[#2abb7f]"><Check className="size-[10px] text-[#161a1d]" strokeWidth={4} /></span>
    <div className="ml-[15px] flex-1">
      <p className="leading-[17px] font-semibold">Type de ticket modifié en Tâche</p>
      {sub && <p className="mt-2 leading-[17px]">{sub}</p>}
    </div>
    {sub && <button aria-label="Fermer la notification" className="mt-px"><X className="size-3.5" strokeWidth={2} /></button>}
  </div>
);

/* ---------- Windows taskbar ---------- */

const Adobe = ({ bg, fg, children }: { bg: string; fg: string; children: string }) => (
  <span className={`flex size-[27px] items-center justify-center rounded-[5px] text-[15px] font-bold ${bg} ${fg}`}>{children}</span>
);

const APPS: { name: string; icon: React.ReactNode; state?: 'open' | 'active' }[] = [
  { name: 'Vue des tâches', icon: <svg viewBox="0 0 30 28" className="h-7 w-[30px]"><rect x="0" y="9" width="21" height="18" rx="1" fill="#6f6f6f" /><rect x="7" y="1" width="22" height="19" rx="1" fill="#efefef" /><path d="M7 9h14v11H7Z" fill="#b4b4b4" /></svg> },
  { name: 'Chat', icon: <svg viewBox="0 0 30 30" className="size-[29px]"><defs><linearGradient id="chat" x1="0" y1="0" x2="1" y2="1"><stop offset="0" stopColor="#8f95ea" /><stop offset="1" stopColor="#5157c0" /></linearGradient></defs><path d="M15 1a14 14 0 1 1-6 26.700L1.500 29 2.700 22A14 14 0 0 1 15 1" fill="url(#chat)" /><rect x="7" y="9.500" width="11" height="11" rx="2.500" fill="#fff" /><path d="m19.500 13.500 4-3v9l-4-3Z" fill="#fff" /></svg> },
  { name: "Assassin's Creed", icon: <svg viewBox="0 0 30 30" className="size-[30px]"><rect width="30" height="30" fill="#020606" /><path d="M15 5c2 6 7 9 8 15l-4 2c0-3-2-6-4-9-2 3-4 6-4 9l-4-2c1-6 6-9 8-15M10 23c3 2.500 7 2.500 10 0" fill="none" stroke="#14776c" strokeWidth="1.100" /></svg> },
  { name: 'Illustrator', icon: <Adobe bg="bg-[#330000]" fg="text-[#ff9a00]">Ai</Adobe> },
  { name: 'Premiere', icon: <Adobe bg="bg-[#00005b]" fg="text-[#9f9fff]">Pr</Adobe> },
  { name: 'XD', icon: <Adobe bg="bg-[#470137]" fg="text-[#ff61f6]">Xd</Adobe> },
  { name: 'Visual Studio Code', icon: <svg viewBox="0 0 30 30" className="size-[30px]"><path d="M21 0.500 29 4v22l-8 3.500Z" fill="#33a9f2" /><path d="M21 .500 2 18.500 5 21.500 21 9Z" fill="#0f7ac5" /><path d="M21 29.500 2 11.500 5 8.500 21 21Z" fill="#1b8fdd" /></svg> },
  { name: 'Photoshop', icon: <Adobe bg="bg-[#001e36]" fg="text-[#31a8ff]">Ps</Adobe> },
  { name: 'Explorateur', state: 'open', icon: <svg viewBox="0 0 30 28" className="h-7 w-[30px]"><path d="M0 2.500A1.500 1.500 0 0 1 1.500 1H10l3 3.500h-13Z" fill="#e0a21a" /><path d="M0 5h28.500A1.500 1.500 0 0 1 30 6.500V27H0Z" fill="#ffd35b" /><path d="M5 27v-5a2 2 0 0 1 2-2h16a2 2 0 0 1 2 2v5Z" fill="#1f83d6" /><path d="M10 22.500h10" stroke="#0c4f8c" strokeWidth="1.600" /></svg> },
  { name: 'Microsoft Store', icon: <svg viewBox="0 0 30 30" className="size-[30px]"><path d="M8 7V2.500A1.500 1.500 0 0 1 9.500 1h11A1.500 1.500 0 0 1 22 2.500V7" fill="none" stroke="#3aa7e8" strokeWidth="1.800" /><path d="M1 6h28v20a3.500 3.500 0 0 1-3.500 3.500h-21A3.500 3.500 0 0 1 1 26Z" fill="#f3f3f3" /><path d="M9 12h5.500v5H9Z" fill="#f25022" /><path d="M15.500 12H21v5h-5.500Z" fill="#7fba00" /><path d="M9 18h5.500v5H9Z" fill="#00a4ef" /><path d="M15.500 18H21v5h-5.500Z" fill="#ffb900" /></svg> },
  { name: 'Edge', icon: <svg viewBox="0 0 30 30" className="size-[30px]"><defs><linearGradient id="edge" x1="0" y1="0" x2="1" y2="0.300"><stop offset="0" stopColor="#1b9de2" /><stop offset="1" stopColor="#5fe06c" /></linearGradient></defs><circle cx="15" cy="15" r="14.500" fill="#0d5cab" /><path d="M.600 13C2 5 8 .500 15 .500c8.500 0 14.500 6 14.500 12.500 0 4.500-3.500 7-7.500 7-3 0-4.500-1.500-3.500-3 2-4-1-8-6-8-6 0-11 4-11.900 4" fill="url(#edge)" /><path d="M.500 15C1 11 5 8.500 10 8.700c-4 2-5 8-2.500 13C9.500 26 14 28.500 18 29.200 8 31 0 24 .500 15" fill="#1583d1" /><path d="M12 18c0 6 7 8.500 15 5-2 3.500-6 6-9 6-5-1-8-6-6-11" fill="#1c3f86" /><path d="M18.500 17c-1 1.500.500 3 3.500 3 3 0 5.500-1 7-3.500 1 3 0 5.500-1.500 7-6 1.500-11-1-9-6.500" fill="#202021" /></svg> },
  { name: 'Visual Studio', icon: <svg viewBox="0 0 30 30" className="size-[30px]"><path d="M21 0.500 29.500 4v22L21 29.500Z" fill="#b98df0" /><path d="M21 .500 9 13 4 9 1 10.500v9L4 21l5-4L21 29.500V21L13.500 15 21 9ZM4 12.500 6.500 15 4 17.500Z" fill="#7d4fc4" /></svg> },
  { name: 'Opera GX', state: 'active', icon: <OperaRing className="size-[30px] text-[#e2234f]" /> },
  { name: 'Creative Cloud', icon: <span className="flex size-[27px] items-center justify-center rounded-md bg-[conic-gradient(from_0deg,#e8242b,#f5d90a,#37c83c,#19a7e0,#5a3fd6,#e0259a,#e8242b)]"><svg viewBox="0 0 22 18" className="h-[18px] w-[22px]" fill="none" stroke="#fff" strokeWidth="2.200"><circle cx="8" cy="10.500" r="5" /><circle cx="13" cy="8.500" r="6.500" /><path d="m8 12 5-5" /></svg></span> },
  { name: 'OBS', icon: <svg viewBox="0 0 30 30" className="size-7"><circle cx="15" cy="15" r="13.800" fill="#1d1c1f" stroke="#c9c9c9" strokeWidth="1.400" /><g fill="none" stroke="#d6d6d6" strokeWidth="1.400"><path d="M15 15c-5-1-7-6-4-10.500 0 4 2 5 4.500 6.500 1 1 1 2.500-.500 4" /><path d="M15 15c3-4 9-3.500 11 1-3.500-2-5.500-.500-7.500.500-1.500.300-3-.300-3.500-1.500" /><path d="M15 15c2 5-1.500 9.500-7 9.500 3.500-2 3.500-4 3.500-6.500.500-1.500 2-2.700 3.500-3" /></g></svg> },
  { name: 'Spotify', state: 'open', icon: <svg viewBox="0 0 30 30" className="size-[29px]"><circle cx="15" cy="15" r="15" fill="#1ed760" /><g fill="none" stroke="#121212" strokeLinecap="round"><path d="M6 10.500c6-2 13-1.500 18 1.500" strokeWidth="2.800" /><path d="M7 15.500c5-1.500 11-1 15.500 1.500" strokeWidth="2.300" /><path d="M8 20c4-1 9-.700 13 1.500" strokeWidth="1.900" /></g></svg> },
  { name: 'Bloc-notes', state: 'open', icon: <svg viewBox="0 0 24 30" className="h-[30px] w-6"><rect x="1" y="3" width="22" height="26" rx="1.500" fill="#5cc4ea" /><path d="M1 27h22v2.500H1Z" fill="#8a4b22" /><path d="M3 1v4M7 1v4M11 1v4M15 1v4M19 1v4M22 1v4" stroke="#2b7d9c" strokeWidth="1.700" /><path d="M6 10.500h12M6 15.500h12M6 20.500h8" stroke="#155d7d" strokeWidth="2" /></svg> },
  { name: 'Chrome', state: 'open', icon: <svg viewBox="0 0 30 30" className="size-[30px]"><circle cx="15" cy="15" r="15" fill="#fbc116" /><path d="M2 7.500A15 15 0 0 1 28 7.500H15a7.500 7.500 0 0 0-6.500 11.300Z" fill="#ea4335" /><path d="M2 7.500A15 15 0 0 0 15 30l6.500-11.200a7.500 7.500 0 0 1-13 0Z" fill="#34a853" /><circle cx="15" cy="15" r="7.300" fill="#fff" /><circle cx="15" cy="15" r="5.700" fill="#3b7ded" /></svg> },
];

const SearchArt = () => (
  <svg viewBox="0 0 62 30" className="h-[30px] w-[62px] shrink-0">
    <path d="m1 5 25-3 3 19-24 6Z" fill="#d7d2dc" /><path d="m4 8 20-2.500.500 3L4.500 11Z" fill="#5e5570" /><path d="m5 13 9-1.300 1.500 9-8.500 2Z" fill="#4a4560" /><path d="m17 12 8-1M17.500 15l8-1M18 18l7.500-1" stroke="#77708a" strokeWidth="1.400" />
    <path d="m36 2 18 6-8 20-16-7Z" fill="#e9e2e6" /><path d="m38 8 10 3M36.500 12l9 3M35 16l7 2.500" stroke="#9a8fa0" strokeWidth="1.200" /><path d="m60 6-4-3-14 14-3 8 7-4Z" fill="#2c2c34" /><path d="m58 5-4-2-6 6 4 3Z" fill="#e0b14a" /><path d="m42 17 5 4-8 4Z" fill="#e3bd5b" />
  </svg>
);

const Taskbar = () => (
  <footer className="flex h-[60px] shrink-0 items-stretch border-t border-[#4a4a4a] bg-[#202021] text-sm text-white">
    <button className="flex w-[242px] items-center gap-2 pl-6 text-left">
      <svg viewBox="0 0 32 30" className="h-[29px] w-8">
        <path d="M13 4c8 0 14 5 14 12s-6 12-13 11c-4-.500-6-3-7-5 8 1 12-9 6-18" fill="#f2a224" />
        <path d="M4 12a4 4 0 0 1 .500-7.500A5 5 0 0 1 14 4a4 4 0 0 1 2 8Z" fill="#b5cdf8" /><path d="M18 27.500a4 4 0 0 1 .500-7.500 5 5 0 0 1 9-.500 4 4 0 0 1 1 8Z" fill="#c3d7fb" />
      </svg>
      <span className="leading-5">19°C<br /><span className="text-[#d0d0d0]">Eclaircies</span></span>
    </button>
    <button aria-label="Démarrer" className="flex w-[55px] items-center justify-center">
      <svg viewBox="0 0 30 30" className="size-[29px]"><defs><linearGradient id="win" x1="0" y1="0" x2="1" y2="1"><stop offset="0" stopColor="#7ff0ff" /><stop offset="1" stopColor="#0a8cf5" /></linearGradient></defs><path d="M1 0h13.500v14.500H0V1a1 1 0 0 1 1-1M15.500 0H29a1 1 0 0 1 1 1v13.500H15.500ZM0 15.500h14.500V30H1a1 1 0 0 1-1-1ZM15.500 15.500H30V29a1 1 0 0 1-1 1H15.500Z" fill="url(#win)" /></svg>
    </button>
    <label className="ml-[5px] mr-[3px] mt-[9px] flex h-10 w-[273px] items-center rounded-full border border-[#3b3b3b] bg-[#363636] pl-3 pr-1">
      <Search className="size-5 shrink-0 text-[#dcdcdc]" strokeWidth={1.700} />
      <input aria-label="Rechercher dans Windows" placeholder="Rechercher" className="ml-3 w-full min-w-0 bg-transparent text-base outline-none placeholder:text-[#d4d4d4]" />
      <SearchArt />
    </label>
    <nav className="flex">
      {APPS.map((a) => (
        <button key={a.name} aria-label={a.name} className="relative flex w-[55px] items-center justify-center">
          {a.state === 'active' && <span className="absolute inset-x-0.5 inset-y-1 rounded-[5px] border border-[#3d3d3d] bg-[#303031]" />}
          <span className="relative">{a.icon}</span>
          {a.state === 'open' && <span className="absolute bottom-1.5 h-1 w-2 rounded-full bg-[#9a9a9a]" />}
          {a.state === 'active' && <span className="absolute bottom-[5px] h-1 w-[30px] rounded-full bg-[#ff96a4]" />}
        </button>
      ))}
    </nav>
    <div className="ml-auto flex items-center pr-[25px]">
      <button aria-label="Icônes masquées"><ChevronUp className="size-5" strokeWidth={2} /></button>
      <span className="ml-6 w-[26px]">FRA</span>
      <svg viewBox="0 0 18 14" className="ml-[26px] h-[15px] w-[17px]" fill="none" stroke="currentColor" strokeWidth="1.500"><path d="M1 5a11.500 11.500 0 0 1 16 0" opacity="0.500" /><path d="M3.500 7.800a7.800 7.800 0 0 1 11 0M6 10.300a4.300 4.300 0 0 1 6 0" /><circle cx="9" cy="12.500" r="1" fill="currentColor" /></svg>
      <svg viewBox="0 0 20 16" className="ml-3 h-4 w-5" fill="none" stroke="currentColor" strokeWidth="1.400"><path d="M1 5.500h3L9 1.500v13L4 10.500H1ZM11.500 5.500a3.500 3.500 0 0 1 0 5" /><path d="M14 3.500a6.500 6.500 0 0 1 0 9" /><path d="M16.500 1.500a9.500 9.500 0 0 1 0 13" opacity="0.400" /></svg>
      <svg viewBox="0 0 20 18" className="ml-2.5 h-[18px] w-5 overflow-visible"><rect x="2" y="4.500" width="15.500" height="11" rx="2.500" fill="none" stroke="currentColor" strokeWidth="1.600" /><path d="M4.500 7H15v6H4.500Z" fill="currentColor" /><path d="M18.800 8v4" stroke="currentColor" strokeWidth="1.700" /><path d="M5.500 0 0 8h3l-.500 5.500L8 6H5Z" fill="currentColor" stroke="#202021" strokeWidth="0.900" /></svg>
      <button className="ml-[18px] w-20 text-right text-[15px]/[20px]">23:29<br />05/05/2023</button>
      <button aria-label="Notifications" className="ml-3">
        <svg viewBox="0 0 18 20" className="h-5 w-[17px]"><path d="M8 2.500c-4 0-5.500 3-5.500 6V12L.500 15.500h15L13.500 12V6L12 2.500Z" fill="currentColor" /><path d="M5.500 17h5a2.500 2.500 0 0 1-5 0" fill="currentColor" /><path d="M5.500 7H10L5.500 12.500H10" fill="none" stroke="#202021" strokeWidth="1.400" /><path d="M12 1h4.500L12 6h4.500" fill="none" stroke="#202021" strokeWidth="3.500" /><path d="M12 1h4.500L12 6h4.500" fill="none" stroke="currentColor" strokeWidth="1.500" /></svg>
      </button>
    </div>
  </footer>
);

export default function App() {
  return (
    <div className="flex h-screen flex-col overflow-hidden bg-[#161a1d] font-['Open_Sans',sans-serif]">
      <div className="flex min-h-0 flex-1 overflow-hidden">
        <OperaSidebar />
        <div className="w-px shrink-0 bg-[#0e010b] pt-[38px]"><div className="h-[860px] max-h-full bg-[linear-gradient(to_bottom,#4ff5e2_0%,#2f8d82_60%,transparent_100%)]" /></div>
        <div className="flex min-w-0 flex-1 flex-col">
          <TabBar />
          <div className="bg-[#200b1e]">
            <AddressBar />
            <BookmarkBar />
          </div>
          <JiraHeader />
          <div className="relative flex min-h-0 flex-1">
            <JiraSidebar />
            <Board />
            <div className="absolute left-[67px] top-[calc(100%-110px)] flex flex-col gap-3.5">
              <Toast sub="Type de ticket modifié" />
              <Toast />
            </div>
          </div>
        </div>
      </div>
      <Taskbar />
    </div>
  );
}
